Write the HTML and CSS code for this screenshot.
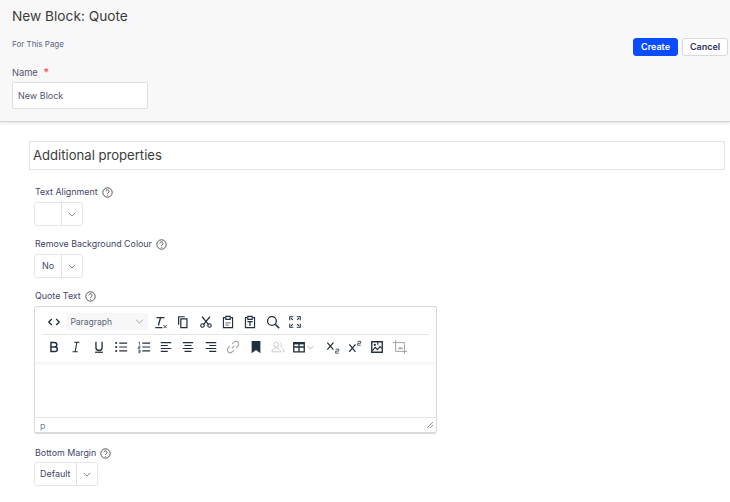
FILE: index.html
```html
<!DOCTYPE html>
<html lang="en">
<head>
<meta charset="utf-8">
<title>New Block: Quote</title>
<link rel="stylesheet" href="styles.css">
</head>
<body>
<svg class="defs" width="0" height="0" aria-hidden="true">
  <symbol id="help" viewBox="0 0 11 11"><circle cx="5.5" cy="5.5" r="4.7" fill="none" stroke="currentColor"/><path d="M3.9 4.4a1.6 1.5 0 1 1 2.4 1.3c-.6.3-.8.6-.8 1.1" fill="none" stroke="currentColor"/><circle cx="5.5" cy="8.2" r=".55" fill="currentColor"/></symbol>
  <symbol id="chev" viewBox="0 0 10 6"><path d="M1 1l4 4 4-4" fill="none" stroke="currentColor"/></symbol>
</svg>
<header class="head">
  <h1 class="title">New Block: Quote</h1>
  <div class="head-row">
    <div>
      <p class="scope">For This Page</p>
      <label class="name-label">Name <span class="req">*</span></label>
      <div class="name-input">New Block</div>
    </div>
    <div class="actions">
      <button class="btn primary">Create</button>
      <button class="btn">Cancel</button>
    </div>
  </div>
</header>
<main class="content">
  <h2 class="section">Additional properties</h2>

  <div class="label">Text Alignment <svg class="help"><use href="#help"/></svg></div>
  <div class="select"><span class="val w-align"></span><span class="arrow"><svg class="chev"><use href="#chev"/></svg></span></div>

  <div class="label l2">Remove Background Colour <svg class="help"><use href="#help"/></svg></div>
  <div class="select"><span class="val w-align">No</span><span class="arrow"><svg class="chev"><use href="#chev"/></svg></span></div>

  <div class="label l3">Quote Text <svg class="help"><use href="#help"/></svg></div>
  <div class="editor">
    <div class="bar bar1">
      <svg class="i" viewBox="0 0 16 16"><path d="M5.5 4.5L2 8l3.500 3.500M10.500 4.500L14 8l-3.500 3.500" fill="none" stroke="#222f3e" stroke-width="1.500"/></svg>
      <div class="format"><span>Paragraph</span><svg class="chev2"><use href="#chev"/></svg></div>
      <svg class="i clear" viewBox="0 0 16 16"><path d="M3 3h9M7.500 3L5 12M1.500 14.500h8" fill="none" stroke="#222f3e" stroke-width="1.500"/><path d="M11 11.500l3.500 3.500M14.500 11.500L11 15" stroke="#222f3e"/></svg>
      <svg class="i" viewBox="0 0 16 16"><path d="M5.500 4.500h7v10h-7z" fill="none" stroke="#222f3e" stroke-width="1.400"/><path d="M3 11V2h7" fill="none" stroke="#222f3e" stroke-width="1.400"/></svg>
      <svg class="i" viewBox="0 0 16 16"><circle cx="4" cy="12" r="2" fill="none" stroke="#222f3e" stroke-width="1.300"/><circle cx="12" cy="12" r="2" fill="none" stroke="#222f3e" stroke-width="1.300"/><path d="M3.500 2l7.500 9M12.500 2L5 11" stroke="#222f3e" stroke-width="1.400"/></svg>
      <svg class="i" viewBox="0 0 16 16"><path d="M5 3H2.800v11.500h10.400V3H11" fill="none" stroke="#222f3e" stroke-width="1.300"/><path d="M5.500 1.500h5v3.500h-5z" fill="none" stroke="#222f3e" stroke-width="1.300"/><path d="M5 9h6M5 11.500h4" stroke="#222f3e" stroke-width=".8"/></svg>
      <svg class="i" viewBox="0 0 16 16"><path d="M5 3H2.800v11.500h10.400V3H11" fill="none" stroke="#222f3e" stroke-width="1.300"/><path d="M5.500 1.500h5v3.500h-5z" fill="none" stroke="#222f3e" stroke-width="1.300"/><path d="M5 7.500h6M8 7.500v5" stroke="#222f3e" stroke-width="1.400"/></svg>
      <svg class="i" viewBox="0 0 16 16"><circle cx="6.800" cy="6.800" r="5" fill="none" stroke="#222f3e" stroke-width="1.500"/><path d="M10.500 10.500L15 15" stroke="#222f3e" stroke-width="1.700"/></svg>
      <svg class="i" viewBox="0 0 16 16"><path d="M6 2H2v4M10 2h4v4M2 10v4h4M14 10v4h-4" fill="none" stroke="#222f3e" stroke-width="1.200"/><path d="M3.500 3.500l2 2M12.500 3.500l-2 2M3.500 12.500l2-2M12.500 12.500l-2-2" stroke="#222f3e" stroke-width="1.200"/></svg>
    </div>
    <div class="bar bar2">
      <svg class="i" viewBox="0 0 16 16"><path d="M4.500 2.800h4.100a2.500 2.500 0 0 1 0 5.200H4.500zM4.500 8h4.700a2.600 2.600 0 0 1 0 5.200H4.500z" fill="none" stroke="#222f3e" stroke-width="1.700"/></svg>
      <svg class="i" viewBox="0 0 16 16"><path d="M6 2.500h6M4 13.500h6M9 2.500l-2 11" fill="none" stroke="#222f3e" stroke-width="1.200"/></svg>
      <svg class="i" viewBox="0 0 16 16"><path d="M4.500 2v6.500a3.500 3.500 0 0 0 7 0V2" fill="none" stroke="#222f3e" stroke-width="1.500"/><path d="M3.500 14h9" stroke="#222f3e" stroke-width="1.400"/></svg>
      <svg class="i" viewBox="0 0 16 16"><path d="M6 3.500h9M6 8h9M6 12.500h9" stroke="#222f3e" stroke-width="1.300"/><circle cx="2.500" cy="3.500" r="1.200" fill="#222f3e"/><circle cx="2.500" cy="8" r="1.200" fill="#222f3e"/><circle cx="2.500" cy="12.500" r="1.200" fill="#222f3e"/></svg>
      <svg class="i" viewBox="0 0 16 16"><path d="M6 3.500h9M6 8h9M6 12.500h9" stroke="#222f3e" stroke-width="1.300"/><path d="M1.500 2.500h1.500v3M1.500 7h2v1.500h-2v1.500h2M1.500 11.500h2v3h-2M1.500 13h2" fill="none" stroke="#222f3e" stroke-width=".8"/></svg>
      <svg class="i" viewBox="0 0 16 16"><path d="M2 3h12M2 6.300h8M2 9.700h12M2 13h8" stroke="#222f3e" stroke-width="1.300"/></svg>
      <svg class="i" viewBox="0 0 16 16"><path d="M2 3h12M4 6.300h8M2 9.700h12M4 13h8" stroke="#222f3e" stroke-width="1.300"/></svg>
      <svg class="i" viewBox="0 0 16 16"><path d="M2 3h12M6 6.300h8M2 9.700h12M6 13h8" stroke="#222f3e" stroke-width="1.300"/></svg>
      <svg class="i" viewBox="0 0 16 16"><path d="M6.500 9.500l3-3M7 4.500l2-2a3 3 0 0 1 4.500 4.500l-2 2M9 11.500l-2 2A3 3 0 0 1 2.500 9l2-2" fill="none" stroke="#a3a8ae" stroke-width="1.300"/></svg>
      <svg class="i" viewBox="0 0 16 16"><path d="M3 1h10v14l-5-3.500L3 15z" fill="#222f3e"/></svg>
      <svg class="i" viewBox="0 0 16 16"><circle cx="6" cy="5.500" r="2.800" fill="none" stroke="#c4c7cb"/><path d="M1 13.500c0-6 10-6 10 0zM10.500 3a2.800 2.800 0 0 1 0 5M12 9c2 .6 3 2.200 3 4.500h-2" fill="none" stroke="#c4c7cb"/></svg>
      <span class="tbl"><svg class="i" viewBox="0 0 16 16"><path d="M2 3h12v10.500H2zM2 8h12M8 3v10.500" fill="none" stroke="#222f3e" stroke-width="1.500"/><path d="M2 3h12v2H2z" fill="#222f3e"/></svg><svg class="chev3"><use href="#chev"/></svg></span>
      <span class="sup"><svg class="i" viewBox="0 0 16 16"><path d="M1.500 3l7 8M8.500 3l-7 8" stroke="#222f3e" stroke-width="1.400"/><path d="M11 10.500h3.500v2.200H11v2.300h3.500" fill="none" stroke="#222f3e" stroke-width=".9"/></svg></span>
      <svg class="i" viewBox="0 0 16 16"><path d="M1.500 5l7 8.500M8.500 5l-7 8.500" stroke="#222f3e" stroke-width="1.400"/><path d="M11 1.500h3.500v2.200H11V6h3.500" fill="none" stroke="#222f3e" stroke-width=".9"/></svg>
      <svg class="i" viewBox="0 0 16 16"><path d="M2 2h12v12H2z" fill="none" stroke="#222f3e" stroke-width="1.500"/><path d="M2.500 12.500l3.500-4 2.500 2.500 3-3.500 2 2M9 2.500v3" fill="none" stroke="#222f3e" stroke-width="1.300"/><circle cx="5.500" cy="5.500" r="1.300" fill="#222f3e"/></svg>
      <svg class="i" viewBox="0 0 16 16"><path d="M3 0v13h13M0 3h13v13" fill="none" stroke="#8f959c"/><path d="M5.500 10.500l2.500-3 1.500 1.500 1-1 1 2.500z" fill="#a3a8ae"/></svg>
    </div>
    <div class="edit-area"></div>
    <div class="status"><span>p</span><svg class="grip" viewBox="0 0 8 8"><path d="M7 1L1 7M7 4L4 7" stroke="#8f959c"/></svg></div>
  </div>

  <div class="label l4">Bottom Margin <svg class="help"><use href="#help"/></svg></div>
  <div class="select"><span class="val">Default</span><span class="arrow"><svg class="chev"><use href="#chev"/></svg></span></div>
</main>
</body>
</html>
```
FILE: styles.css
```css
* { box-sizing: border-box; }
html, body { margin: 0; height: 502px; overflow: hidden; background: #fff; }
body { font-family: Inter, "Liberation Sans", sans-serif; color: #32325d; }
.defs { position: absolute; }
.head {
  height: 122px;
  padding: 8px 0 0 12px;
  background: #f8f8f8;
  border-bottom: 1px solid #d4d4d4;
  box-shadow: 0 1px 3px rgba(0,0,0,.12);
}
.title { margin: 0; font-size: 13.700px; line-height: 17px; font-weight: 400; color: #3c3c3c; }
.head-row { display: flex; justify-content: space-between; }
.scope { margin: 13px 0 0; font-size: 8px; line-height: 12px; color: #5a6785; }
.name-label { display: block; margin-top: 16px; font-size: 9.300px; line-height: 12px; color: #55556f; }
.req { color: #ef4444; margin-left: 3px; font-size: 11px; }
.name-input {
  width: 136px; height: 27px; margin-top: 3px; padding-left: 5px;
  background: #fff; border: 1px solid #e0e0e0; border-radius: 2px;
  font-size: 9px; line-height: 25px; color: #55556f;
}
.actions { display: flex; gap: 4px; margin: 13px 2px 0 0; }
.btn {
  height: 18px; width: 46px; padding: 0;
  font: 600 9px/16px Inter, "Liberation Sans", sans-serif;
  color: #32325d; background: #fff; border: 1px solid #d8d8d8; border-radius: 3px;
}
.btn.primary { width: 45px; background: #0a4cff; border-color: #0a4cff; color: #fff; }
.content { padding: 19px 5px 0 29px; }
.section {
  margin: 0; height: 29px; padding-left: 3px;
  font-size: 13.100px; line-height: 27px; font-weight: 400; color: #3c3c3c;
  border: 1px solid #e2e2e2;
}
.label {
  display: flex; align-items: center; gap: 4px;
  margin: 16px 0 0 6px; font-size: 8.900px; line-height: 12px; color: #45456a;
}
.l2, .l3 { margin-top: 12px; }
.l4 { margin-top: 13px; }
.l4 + .select { margin-top: 3px; }
.help { width: 11px; height: 11px; color: #555; }
.select {
  display: inline-flex; height: 24px; margin: 4px 0 0 5px; vertical-align: top;
  border: 1px solid #e6e6e6; border-radius: 3px; font-size: 9px; line-height: 22px; color: #45456a;
}
.val { padding: 0 5px; border-right: 1px solid #e0e0e0; }
.w-align { width: 27px; padding: 0; text-align: center; }
.arrow { display: flex; align-items: center; justify-content: center; width: 20px; }
.chev { width: 8px; height: 5px; color: #666; }
.editor {
  display: flex; flex-direction: column;
  width: 403px; height: 128px; margin: 4px 0 0 5px;
  border: 1px solid #d9d9d9; border-bottom-width: 2px; border-radius: 3px;
  background: #fff;
}
.bar { display: flex; align-items: center; margin: 0 7px; gap: 8.400px; }
.bar1 { height: 28px; padding: 2px 0 0 5px; gap: 8.400px; border-bottom: 1px solid #e6e6e6; }
.bar2 { height: 27px; padding: 0 0 3px 5px; }
.i { flex: none; width: 14px; height: 14px; }
.format {
  display: flex; align-items: center; justify-content: space-between;
  width: 82px; height: 17px; margin-left: -3px; padding: 0 4px;
  background: #f7f7f7; font-size: 8.500px; color: #5a6475;
}
.chev2 { width: 9px; height: 5px; color: #8a8f98; }
.clear { margin-left: -3px; }
.tbl { display: flex; align-items: center; gap: 1px; margin-left: -1px; }
.chev3 { width: 7px; height: 5px; color: #8a8f98; }
.sup { display: flex; margin-left: 3px; }
.edit-area { flex: 1; box-shadow: inset 0 5px 5px -4px rgba(0,0,0,.08); }
.status {
  display: flex; align-items: center; justify-content: space-between;
  height: 15px; padding: 0 2px 0 5px; border-top: 1px solid #e6e6e6;
  font-size: 9px; color: #7a8290;
}
.grip { width: 8px; height: 8px; }
```
